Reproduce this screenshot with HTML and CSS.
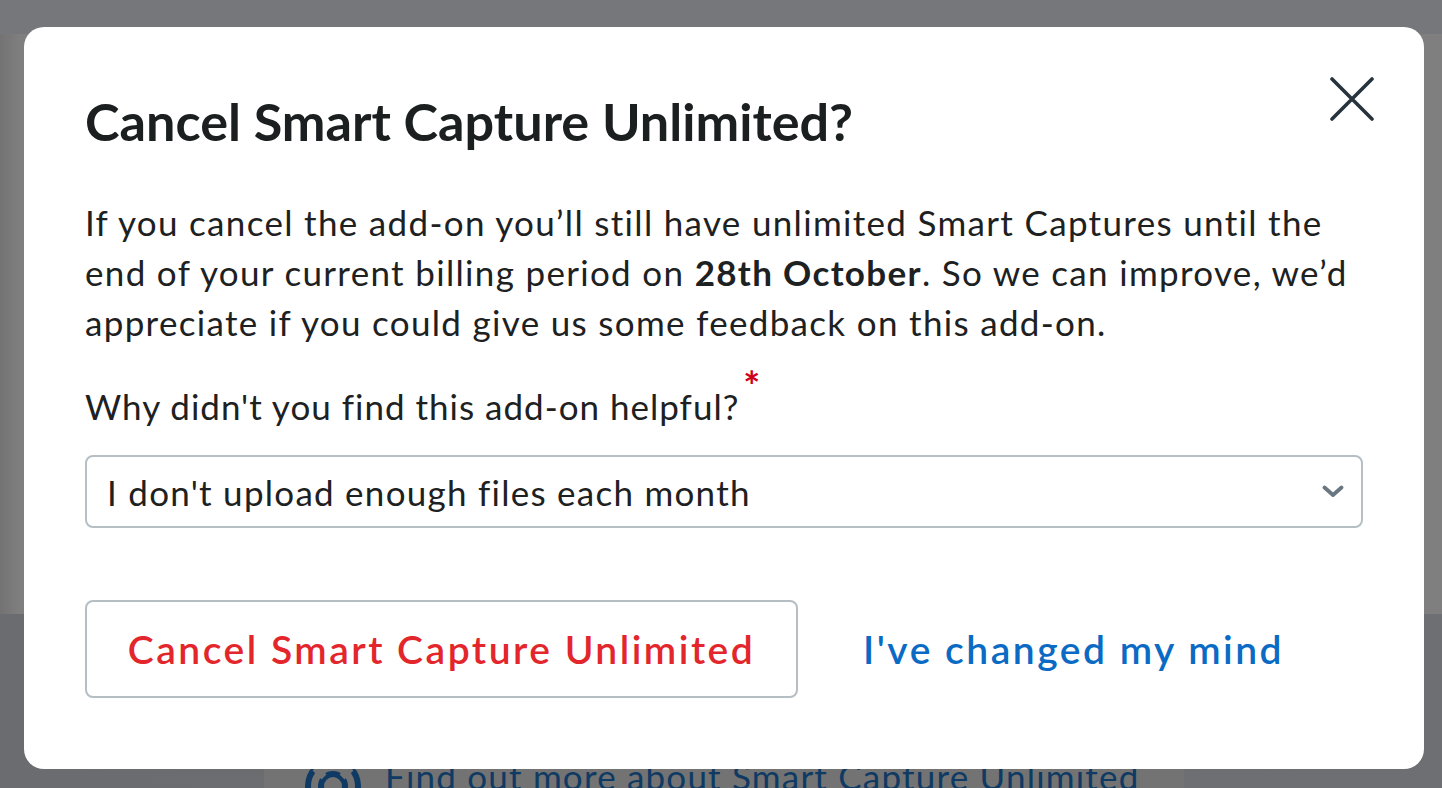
FILE: index.html
```html
<!DOCTYPE html>
<html lang="en">
<head>
<meta charset="utf-8">
<title>Cancel Smart Capture Unlimited</title>
<link rel="stylesheet" href="styles.css">
</head>
<body>
<div class="page">
  <div class="topbar"></div>
  <div class="main"></div>
  <div class="lower">
    <div class="help-card">
      <svg class="help-icon" width="60" height="60" viewBox="0 0 60 60" aria-hidden="true">
        <circle cx="30" cy="30" r="25" fill="none" stroke="#0f3a63" stroke-width="6"/>
        <circle cx="30" cy="30" r="12" fill="none" stroke="#0f3a63" stroke-width="6"/>
        <path d="M12 12 L21 21 M48 12 L39 21 M12 48 L21 39 M48 48 L39 39" stroke="#737373" stroke-width="7"/>
      </svg>
      <span class="help-text">Find out more about Smart Capture Unlimited</span>
    </div>
  </div>
</div>

<div class="modal" role="dialog" aria-labelledby="modal-title">
  <button class="close" aria-label="Close">
    <svg width="44" height="44" viewBox="0 0 44 44" aria-hidden="true">
      <path d="M2 2 L42 42 M42 2 L2 42" stroke="#28343d" stroke-width="3.6" stroke-linecap="round" fill="none"/>
    </svg>
  </button>
  <h1 id="modal-title" class="title">Cancel Smart Capture Unlimited?</h1>
  <p class="intro">If you cancel the add-on you’ll still have unlimited Smart Captures until the<br>end of your current billing period on <strong>28th October</strong>. So we can improve, we’d<br>appreciate if you could give us some feedback on this add-on.</p>
  <label class="label" for="reason">Why didn't you find this add-on helpful?<span class="req">*</span></label>
  <div class="select-wrap">
    <div class="select" id="reason">I don't upload enough files each month</div>
    <svg class="chevron" width="22" height="13" viewBox="0 0 22 13" aria-hidden="true">
      <path d="M2.5 2.5 L11 10 L19.5 2.5" stroke="#6b7780" stroke-width="3.8" stroke-linecap="round" stroke-linejoin="round" fill="none"/>
    </svg>
  </div>
  <div class="actions">
    <button class="btn-cancel">Cancel Smart Capture Unlimited</button>
    <a class="link-keep" href="#">I've changed my mind</a>
  </div>
</div>
</body>
</html>
```

FILE: styles.css
```css
* { box-sizing: border-box; }

html, body {
  margin: 0;
  padding: 0;
  height: 100%;
  overflow: hidden;
}

body {
  font-family: "Lato", "Liberation Sans", sans-serif;
  background: #7e7e7e;
}

.page {
  display: flex;
  flex-direction: column;
  height: 788px;
}

.topbar {
  height: 34px;
  background: #76777b;
}

.main {
  height: 580px;
  background: linear-gradient(to right, #737373 0, #7f7f7f 20px, #7f7f7f 100%);
}

.lower {
  flex: 1;
  background: linear-gradient(to right, #6a6c70 0, #6d6f73 100%);
  display: flex;
  align-items: flex-end;
}

.help-card {
  margin-left: 264px;
  width: 920px;
  height: 120px;
  background: #737373;
  display: flex;
  align-items: flex-end;
  gap: 22px;
  padding-left: 39px;
  overflow: hidden;
}

.help-icon {
  flex: none;
  margin-bottom: -28px;
}

.help-text {
  font-size: 35px;
  line-height: 40px;
  letter-spacing: 1.2px;
  color: #0f3a63;
  margin-bottom: -8px;
}

.modal {
  position: fixed;
  left: 24px;
  top: 27px;
  width: 1400px;
  height: 742px;
  background: #ffffff;
  border-radius: 20px;
  padding: 62px 61px 0;
}

.close {
  position: absolute;
  top: 50px;
  right: 50px;
  width: 44px;
  height: 44px;
  padding: 0;
  border: 0;
  background: none;
  cursor: pointer;
}

.close svg { display: block; }

.title {
  margin: 0;
  font-size: 52.2px;
  line-height: 64px;
  font-weight: 700;
  color: #1b1f20;
}

.intro {
  margin: 44px 0 0;
  font-size: 35px;
  line-height: 50px;
  letter-spacing: 1.32px;
  white-space: nowrap;
  color: #1d2122;
}

.intro strong { font-weight: 700; }

.label {
  display: block;
  margin-top: 34px;
  font-size: 35px;
  line-height: 50px;
  letter-spacing: 1px;
  color: #1d2122;
}

.req {
  position: relative;
  top: -19px;
  margin-left: 4px;
  font-size: 40px;
  font-weight: 700;
  line-height: 0;
  letter-spacing: 0;
  color: #d0021b;
}

.select-wrap {
  position: relative;
  margin-top: 24px;
}

.select {
  height: 73px;
  border: 2px solid #b5bfc4;
  border-radius: 8px;
  padding: 0 20px;
  display: flex;
  align-items: center;
  font-size: 35px;
  letter-spacing: 1.26px;
  color: #1d2122;
}

.chevron {
  position: absolute;
  right: 19px;
  top: 30px;
}

.actions {
  display: flex;
  align-items: center;
  gap: 65px;
  margin-top: 72px;
}

.btn-cancel {
  width: 713px;
  height: 98px;
  border: 2px solid #b4bec3;
  border-radius: 8px;
  background: #ffffff;
  font-family: inherit;
  font-size: 39px;
  font-weight: 600;
  letter-spacing: 2.5px;
  color: #e3262b;
  cursor: pointer;
}

.link-keep {
  font-size: 39px;
  font-weight: 600;
  letter-spacing: 2.5px;
  color: #0b6bc4;
  text-decoration: none;
}
```
